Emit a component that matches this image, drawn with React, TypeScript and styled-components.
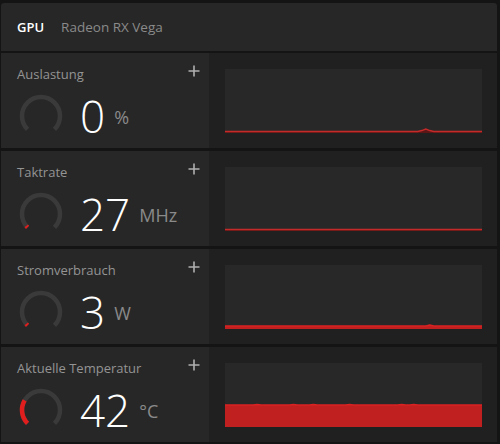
import React from 'react';
import styled, { createGlobalStyle } from 'styled-components';

const GlobalStyle = createGlobalStyle`
  html, body {
    margin: 0;
    padding: 0;
    background: #141414;
  }
  body {
    font-family: 'Open Sans', 'Noto Sans', 'Liberation Sans', sans-serif;
    -webkit-font-smoothing: antialiased;
  }
`;

const Page = styled.div`
  width: 500px;
  height: 444px;
  box-sizing: border-box;
  padding: 3px 3px 2px 1px;
  display: flex;
  flex-direction: column;
  gap: 2px;
  background: #141414;
  overflow: hidden;
`;

const Header = styled.div`
  height: 48px;
  flex: none;
  display: flex;
  align-items: center;
  padding-left: 16px;
  background: #272727;
  border-radius: 3px 3px 0 0;
`;

const DeviceType = styled.span`
  color: #fff;
  font-size: 13px;
  font-weight: 600;
`;

const DeviceName = styled.span`
  margin-left: 17px;
  color: #8a8a8a;
  font-size: 13.5px;
`;

const Rows = styled.div`
  display: flex;
  flex-direction: column;
  gap: 3px;
`;

const Row = styled.div`
  height: 95px;
  display: grid;
  grid-template-columns: 208px 1fr;
`;

const InfoCell = styled.div`
  background: #272727;
  padding: 11px 9px 0 16px;
  display: flex;
  flex-direction: column;
`;

const TitleRow = styled.div`
  height: 20px;
  display: flex;
  align-items: center;
  justify-content: space-between;
`;

const Title = styled.span`
  color: #949494;
  font-size: 13px;
`;

const PlusIcon = styled.svg`
  width: 12px;
  height: 12px;
  margin-top: -6px;
`;

const ValueRow = styled.div`
  margin-top: 10px;
  display: flex;
  align-items: center;
`;

const GaugeSvg = styled.svg`
  width: 44px;
  height: 44px;
  flex: none;
  margin-left: 2px;
`;

const Value = styled.span`
  margin-left: 17px;
  color: #fff;
  font-size: 44px;
  font-weight: 300;
  line-height: 44px;
`;

const Unit = styled.span`
  margin-left: 9px;
  padding-top: 2px;
  color: #8a8a8a;
  font-size: 18px;
  line-height: 18px;
`;

const ChartCell = styled.div`
  background: #202020;
  padding: 16px 15px 15px 16px;
  display: flex;
`;

const ChartSvg = styled.svg`
  flex: 1;
  height: 64px;
  display: block;
  background: #282828;
`;

const polar = (cx: number, cy: number, r: number, deg: number) => {
  const a = (deg * Math.PI) / 180;
  return [cx + r * Math.cos(a), cy + r * Math.sin(a)];
};

const arcPath = (from: number, to: number) => {
  const [x0, y0] = polar(22, 22, 19, from);
  const [x1, y1] = polar(22, 22, 19, to);
  const large = to - from > 180 ? 1 : 0;
  return `M ${x0.toFixed(2)} ${y0.toFixed(2)} A 19 19 0 ${large} 1 ${x1.toFixed(2)} ${y1.toFixed(2)}`;
};

const Gauge: React.FC<{ fraction: number }> = ({ fraction }) => {
  const start = 135;
  const sweep = 270;
  const end = start + Math.max(fraction * sweep, fraction > 0 ? 6 : 0);
  return (
    <GaugeSvg viewBox="0 0 44 44">
      <path d={arcPath(start, start + sweep)} fill="none" stroke="#3a3a3a" strokeWidth="4.5" />
      {fraction > 0 && (
        <path d={arcPath(start, end)} fill="none" stroke="#e01e1e" strokeWidth="4.5" />
      )}
    </GaugeSvg>
  );
};

const Plus = () => (
  <PlusIcon viewBox="0 0 12 12">
    <path d="M6 0.5 V11.5 M0.5 6 H11.5" stroke="#b0b0b0" strokeWidth="1.6" />
  </PlusIcon>
);

// y values for the graph, 0 = bottom, height 64
const buildPath = (points: number[]) => {
  const step = 257 / (points.length - 1);
  const line = points.map((v, i) => `${(i * step).toFixed(1)},${(64 - v).toFixed(1)}`).join(' L ');
  return { line: `M ${line}`, area: `M 0,64 L ${line} L 257,64 Z` };
};

const flat = (n: number, v: number) => Array.from({ length: n }, () => v);

const Chart: React.FC<{ points: number[]; kind: 'line' | 'fill' }> = ({ points, kind }) => {
  const { line, area } = buildPath(points);
  return (
    <ChartSvg viewBox="0 0 257 64" preserveAspectRatio="none">
      {kind === 'line' ? (
        <>
          <path d={area} fill="#5c1616" />
          <path d={line} fill="none" stroke="#c42a2a" strokeWidth="1.5" />
        </>
      ) : (
        <>
          <path d={area} fill="#c02020" />
          <path d={line} fill="none" stroke="#d92222" strokeWidth="1.5" />
        </>
      )}
    </ChartSvg>
  );
};

const usage = flat(65, 1.6).map((v, i) => (i === 50 ? 4 : i === 49 || i === 51 ? 2.4 : v));
const clock = flat(65, 1.6);
const power = flat(65, 3).map((v, i) => (i === 51 ? 4 : v));
const temp = flat(65, 22).map((v, i) => ([8, 17, 22, 31, 44, 47].includes(i) ? 22.6 : v));

const metrics = [
  { title: 'Auslastung', value: '0', unit: '%', fraction: 0, points: usage, kind: 'line' as const },
  { title: 'Taktrate', value: '27', unit: 'MHz', fraction: 0.01, points: clock, kind: 'line' as const },
  { title: 'Stromverbrauch', value: '3', unit: 'W', fraction: 0.01, points: power, kind: 'fill' as const },
  { title: 'Aktuelle Temperatur', value: '42', unit: '°C', fraction: 0.28, points: temp, kind: 'fill' as const },
];

export default function App() {
  return (
    <>
      <GlobalStyle />
      <Page>
        <Header>
          <DeviceType>GPU</DeviceType>
          <DeviceName>Radeon RX Vega</DeviceName>
        </Header>
        <Rows>
          {metrics.map(m => (
            <Row key={m.title}>
              <InfoCell>
                <TitleRow>
                  <Title>{m.title}</Title>
                  <Plus />
                </TitleRow>
                <ValueRow>
                  <Gauge fraction={m.fraction} />
                  <Value>{m.value}</Value>
                  <Unit>{m.unit}</Unit>
                </ValueRow>
              </InfoCell>
              <ChartCell>
                <Chart points={m.points} kind={m.kind} />
              </ChartCell>
            </Row>
          ))}
        </Rows>
      </Page>
    </>
  );
}
